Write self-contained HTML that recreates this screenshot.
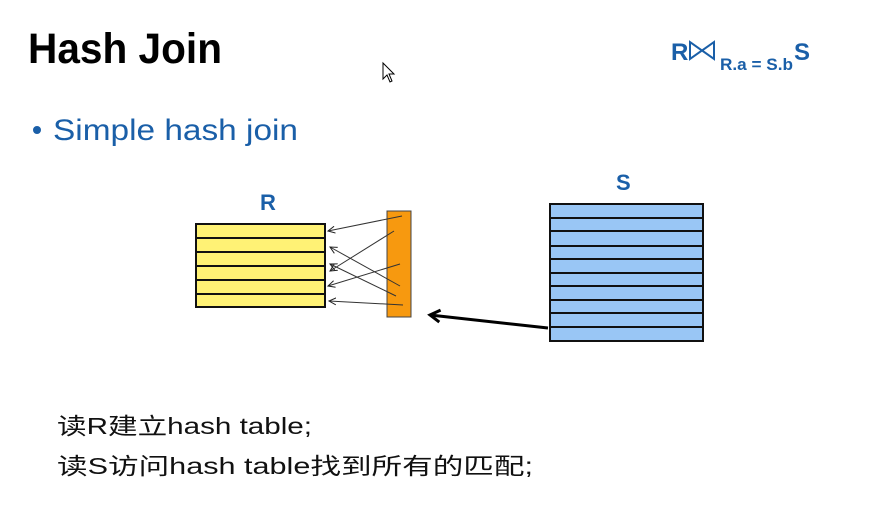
<!DOCTYPE html>
<html><head><meta charset="utf-8"><style>
html,body{margin:0;padding:0;background:#fff;width:892px;height:517px;overflow:hidden}
svg{display:block}
</style></head><body>
<svg width="892" height="517" viewBox="0 0 892 517" xmlns="http://www.w3.org/2000/svg">
<defs>
<marker id="ah" markerWidth="8" markerHeight="8" refX="7" refY="4" orient="auto" markerUnits="userSpaceOnUse">
<path d="M0,0.5 L7,4 L0,7.5" fill="none" stroke="#222" stroke-width="1"/>
</marker>
<marker id="bh" markerWidth="16" markerHeight="16" refX="13" refY="8" orient="auto" markerUnits="userSpaceOnUse">
<path d="M3,2 L13,8 L3,14" fill="none" stroke="#000" stroke-width="3"/>
</marker>
</defs>
<text x="28" y="63" font-family="Liberation Sans, sans-serif" font-weight="bold" font-size="43" textLength="194" lengthAdjust="spacingAndGlyphs">Hash Join</text>
<g fill="#1a5fa8" font-family="Liberation Sans, sans-serif" font-weight="bold">
<text x="671" y="60" font-size="24">R</text>
<path d="M690,42 L690,59 L702,50.5 Z M714,42 L714,59 L702,50.5 Z" fill="none" stroke="#1a5fa8" stroke-width="2"/>
<text x="720" y="70" font-size="17" textLength="73" lengthAdjust="spacingAndGlyphs">R.a = S.b</text>
<text x="794" y="60" font-size="24">S</text>
</g>
<circle cx="37" cy="130" r="4" fill="#1a5fa8"/>
<text x="53" y="140" font-family="Liberation Sans, sans-serif" font-size="30" fill="#1a5fa8" textLength="245" lengthAdjust="spacingAndGlyphs">Simple hash join</text>
<text x="260" y="210" font-family="Liberation Sans, sans-serif" font-weight="bold" font-size="22" fill="#1a5fa8">R</text>
<text x="616" y="190" font-family="Liberation Sans, sans-serif" font-weight="bold" font-size="22" fill="#1a5fa8">S</text>
<g stroke="#111" stroke-width="2" fill="#fff275">
<rect x="196" y="224" width="129" height="83"/>
<line x1="196" y1="238" x2="325" y2="238"/>
<line x1="196" y1="252" x2="325" y2="252"/>
<line x1="196" y1="266" x2="325" y2="266"/>
<line x1="196" y1="280" x2="325" y2="280"/>
<line x1="196" y1="294" x2="325" y2="294"/>
</g>
<rect x="387" y="211" width="24" height="106" fill="#f7990f" stroke="#444" stroke-width="1"/>
<g stroke="#333" stroke-width="1" marker-end="url(#ah)">
<line x1="402" y1="216" x2="328" y2="231"/>
<line x1="394" y1="231" x2="330" y2="271"/>
<line x1="400" y1="264" x2="328" y2="286"/>
<line x1="400" y1="286" x2="330" y2="247"/>
<line x1="396" y1="296" x2="330" y2="264"/>
<line x1="403" y1="305" x2="329" y2="301"/>
</g>
<g stroke="#111" stroke-width="2" fill="#99c6f5">
<rect x="550" y="204" width="153" height="137"/>
<line x1="550" y1="218" x2="703" y2="218"/>
<line x1="550" y1="231" x2="703" y2="231"/>
<line x1="550" y1="246" x2="703" y2="246"/>
<line x1="550" y1="259" x2="703" y2="259"/>
<line x1="550" y1="273" x2="703" y2="273"/>
<line x1="550" y1="286" x2="703" y2="286"/>
<line x1="550" y1="300" x2="703" y2="300"/>
<line x1="550" y1="313" x2="703" y2="313"/>
<line x1="550" y1="327" x2="703" y2="327"/>
</g>
<line x1="548" y1="328" x2="430" y2="315" stroke="#000" stroke-width="3" marker-end="url(#bh)"/>
<g font-family="Liberation Sans, 'Noto Sans CJK SC', sans-serif" font-size="23" fill="#111">
<text x="57" y="434" textLength="255" lengthAdjust="spacingAndGlyphs">读R建立hash table;</text>
<text x="57" y="474" textLength="476" lengthAdjust="spacingAndGlyphs">读S访问hash table找到所有的匹配;</text>
</g>
<path d="M383,63 L383,79 L387,75 L390,82 L392,81 L389,74 L394,74 Z" fill="#fff" stroke="#000" stroke-width="1"/>
</svg>
</body></html>
